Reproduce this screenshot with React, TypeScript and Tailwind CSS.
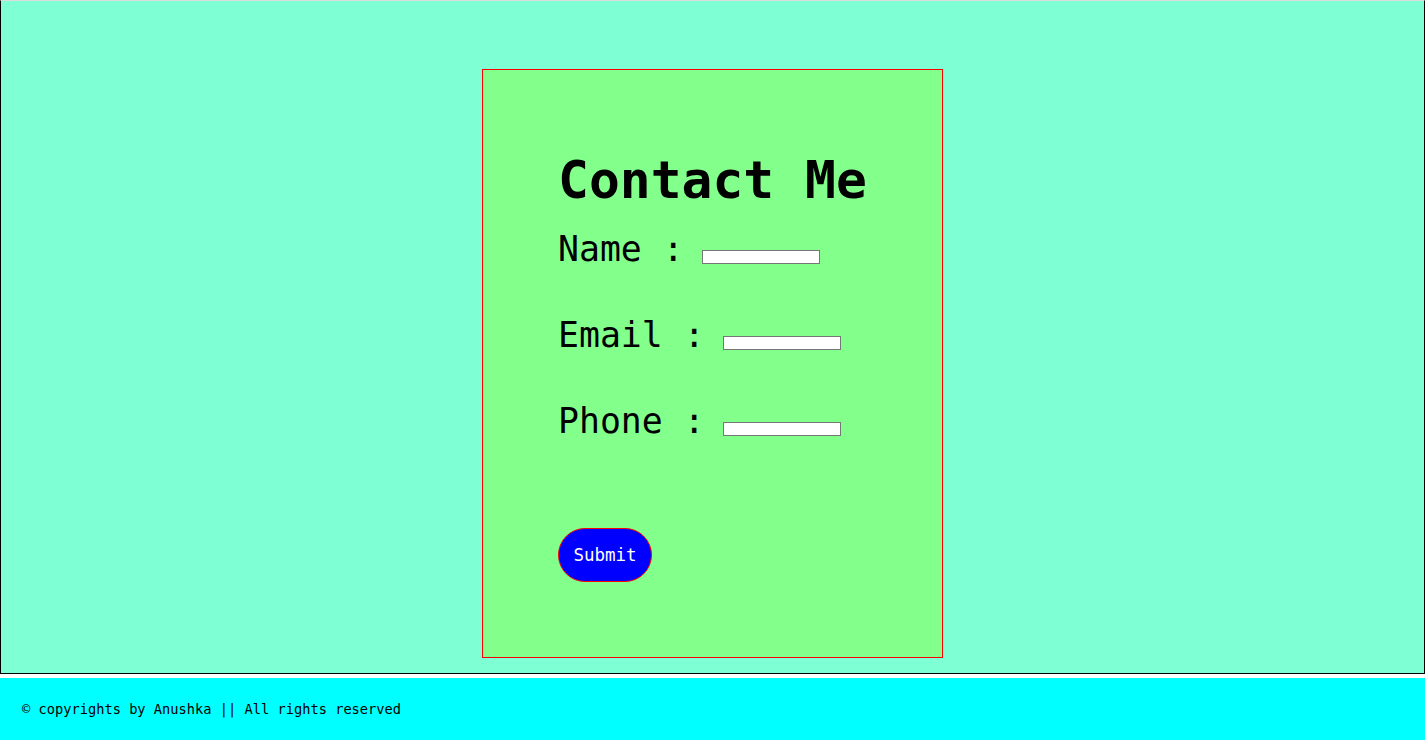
import React from 'react';

const mono = { fontFamily: '"DejaVu Sans Mono", "Liberation Mono", monospace' };

const Field: React.FC<{ label: string }> = ({ label }) => (
  <div className="flex items-end h-[35px]">
    <span className="text-[34.8px] leading-none text-black whitespace-pre">{label}</span>
    <input
      type="text"
      className="ml-[18px] w-[118px] h-[14px] mb-[2px] bg-white border border-[#767676] outline-none"
    />
  </div>
);

const App: React.FC = () => {
  return (
    <div className="w-[1425px] bg-white" style={mono}>
      <main className="bg-[#7fffd4] border border-black border-t-[#dcdcdc] pt-[68px] pb-[15px] flex justify-center">
        <div className="w-[461px] h-[589px] bg-[#83ff8b] border border-[#ff0000] pt-[85px] pl-[75px] flex flex-col">
          <h1 className="text-[51.3px] leading-none font-bold text-black">Contact Me</h1>
          <form className="flex flex-col mt-[25px] gap-[51px]" onSubmit={(e) => e.preventDefault()}>
            <Field label="Name :" />
            <Field label="Email :" />
            <Field label="Phone :" />
            <button
              type="submit"
              className="mt-[39px] w-[94px] h-[54px] rounded-full bg-[#0000ff] border border-[#ff0000] text-white text-[17.5px] flex items-center justify-center"
            >
              Submit
            </button>
          </form>
        </div>
      </main>
      <footer className="mt-[4px] h-[62px] bg-[#00ffff] flex items-center pl-[22px] text-[13.7px] text-black">
        © copyrights by Anushka || All rights reserved
      </footer>
    </div>
  );
};

export default App;
